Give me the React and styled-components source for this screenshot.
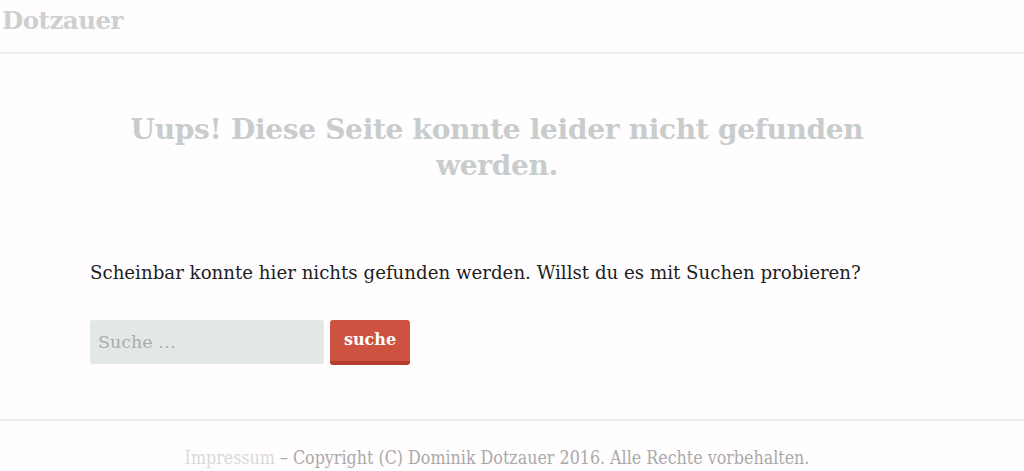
import React from "react";
import styled, { createGlobalStyle } from "styled-components";

const GlobalStyle = createGlobalStyle`
  html, body {
    margin: 0;
    padding: 0;
    background: #fffdfe;
  }
  body {
    font-family: "DejaVu Serif", "Liberation Serif", serif;
    color: #222;
  }
`;

const Header = styled.header`
  height: 52px;
  border-bottom: 2px solid #efeeee;
  padding: 0 2px;
  display: flex;
  align-items: flex-start;
`;

const Logo = styled.a`
  font-family: "DejaVu Serif", serif;
  font-weight: bold;
  font-size: 24.5px;
  color: #cfcfcf;
  text-decoration: none;
  line-height: 42px;
  letter-spacing: -0.5px;
`;

const Main = styled.main`
  padding: 58px 120px 0 90px;
  height: 367px;
  box-sizing: border-box;
  border-bottom: 2px solid #efeeee;
`;

const Title = styled.h1`
  margin: 0;
  font-size: 28px;
  line-height: 36px;
  font-weight: bold;
  color: #c9cccc;
  text-align: center;
  letter-spacing: -0.3px;
`;

const Text = styled.p`
  margin: 76px 0 34px;
  font-size: 18.2px;
  line-height: 26px;
  color: #1d1d1d;
  white-space: nowrap;
`;

const SearchForm = styled.form`
  display: flex;
  gap: 6px;
  align-items: flex-start;
`;

const SearchField = styled.input`
  width: 234px;
  height: 44px;
  box-sizing: border-box;
  border: none;
  border-radius: 3px;
  background: #e3e8e7;
  padding: 0 8px;
  font-family: "DejaVu Serif", serif;
  font-size: 17.5px;
  color: #333;
  &::placeholder {
    color: #a9adad;
  }
`;

const SearchButton = styled.button`
  width: 80px;
  height: 45px;
  box-sizing: border-box;
  border: none;
  border-bottom: 4px solid #b33d2c;
  border-radius: 3px;
  background: #cd5340;
  color: #fff;
  font-family: "DejaVu Serif", serif;
  font-weight: bold;
  font-size: 16px;
  padding: 0 0 2px;
`;

const Footer = styled.footer`
  text-align: center;
  padding: 26px 30px 0 0;
  font-family: "DejaVu Serif Condensed", "DejaVu Serif", serif;
  font-stretch: condensed;
  font-size: 17.7px;
  line-height: 22px;
  color: #a9a9a9;
`;

const FooterLink = styled.a`
  color: #d9d9d9;
  text-decoration: none;
`;

export default function App() {
  return (
    <>
      <GlobalStyle />
      <Header>
        <Logo href="#">Dotzauer</Logo>
      </Header>
      <Main>
        <Title>Uups! Diese Seite konnte leider nicht gefunden werden.</Title>
        <Text>
          Scheinbar konnte hier nichts gefunden werden. Willst du es mit Suchen probieren?
        </Text>
        <SearchForm onSubmit={(e) => e.preventDefault()}>
          <SearchField type="search" placeholder="Suche …" />
          <SearchButton type="submit">suche</SearchButton>
        </SearchForm>
      </Main>
      <Footer>
        <FooterLink href="#">Impressum</FooterLink> – Copyright (C) Dominik Dotzauer 2016. Alle Rechte vorbehalten.
      </Footer>
    </>
  );
}
